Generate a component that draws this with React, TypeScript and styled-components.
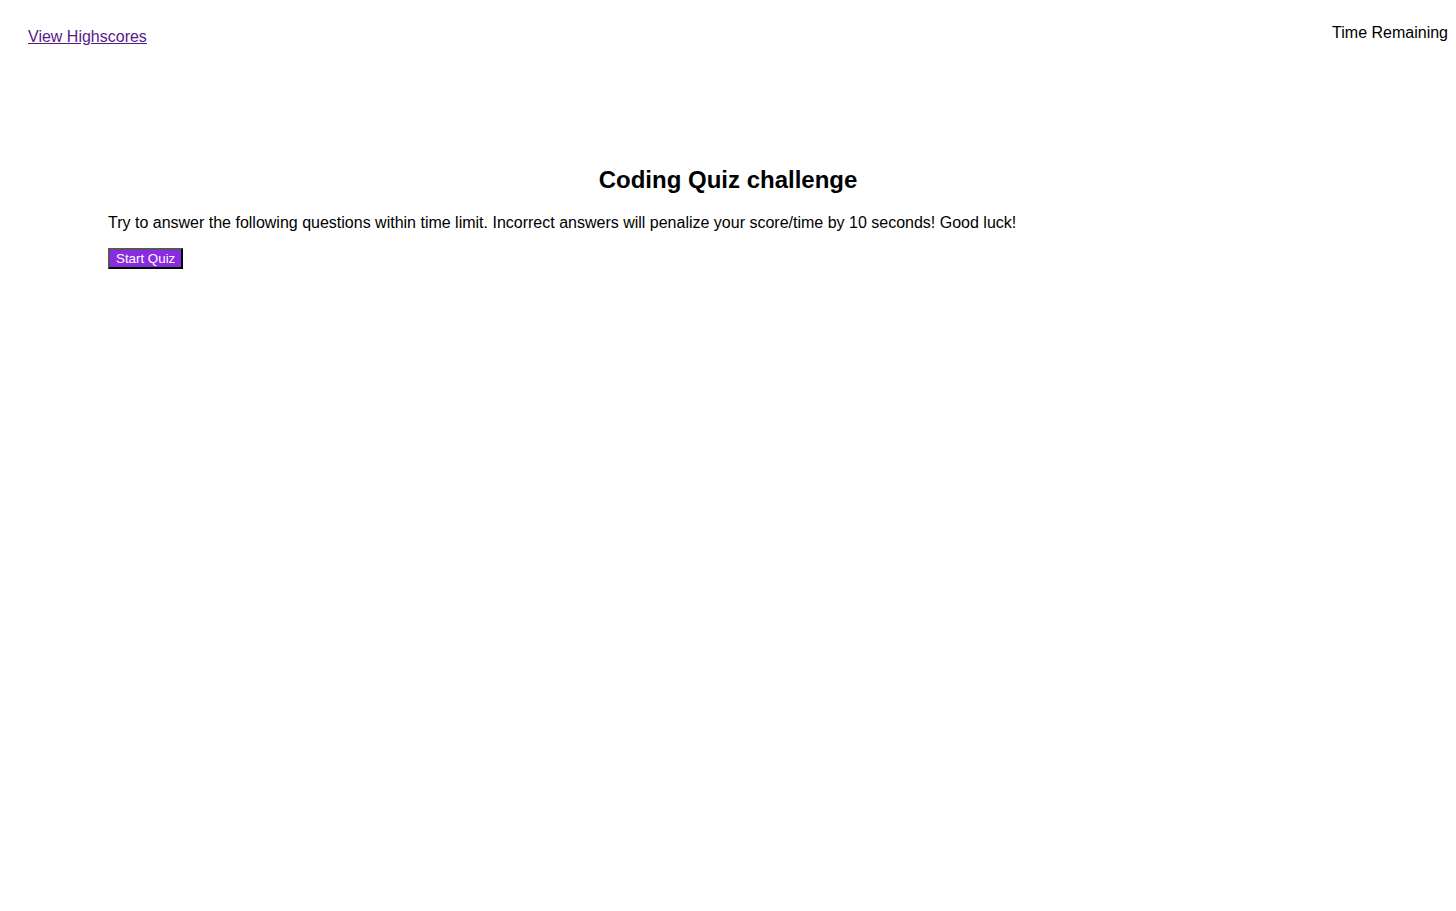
import React from "react";
import styled, { createGlobalStyle } from "styled-components";

const Global = createGlobalStyle`
  html, body { margin: 0; padding: 0; background: #fff; }
  body { font-family: "Liberation Sans", Arial, sans-serif; color: #000; }
`;

const Header = styled.header`
  display: flex;
  justify-content: space-between;
  align-items: flex-start;
  height: 60px;
  font-size: 16px;
`;

const HighscoreLink = styled.a`
  margin: 28px 0 0 28px;
  color: #551a8b;
  text-decoration: underline;
`;

const Timer = styled.div`
  margin: 24px 8px 0 0;
`;

const Main = styled.main`
  padding: 0 108px;
`;

const Title = styled.h1`
  margin: 106px -108px 0;
  font-size: 24px;
  font-weight: bold;
  text-align: center;
`;

const Intro = styled.p`
  margin: 20px 0 0;
  font-size: 16px;
`;

const StartButton = styled.button`
  margin-top: 16px;
  font-family: "Liberation Sans", Arial, sans-serif;
  font-size: 13.333px;
  padding: 1px 6px;
  background: #8a2be2;
  color: #fff;
  border: 2px outset #333;
  border-color: #555 #222 #222 #555;
  cursor: pointer;
`;

export default function App() {
  return (
    <>
      <Global />
      <Header>
        <HighscoreLink href="#">View Highscores</HighscoreLink>
        <Timer>Time Remaining</Timer>
      </Header>
      <Main>
        <Title>Coding Quiz challenge</Title>
        <Intro>
          Try to answer the following questions within time limit. Incorrect answers will penalize your score/time by 10 seconds! Good luck!
        </Intro>
        <StartButton>Start Quiz</StartButton>
      </Main>
    </>
  );
}
